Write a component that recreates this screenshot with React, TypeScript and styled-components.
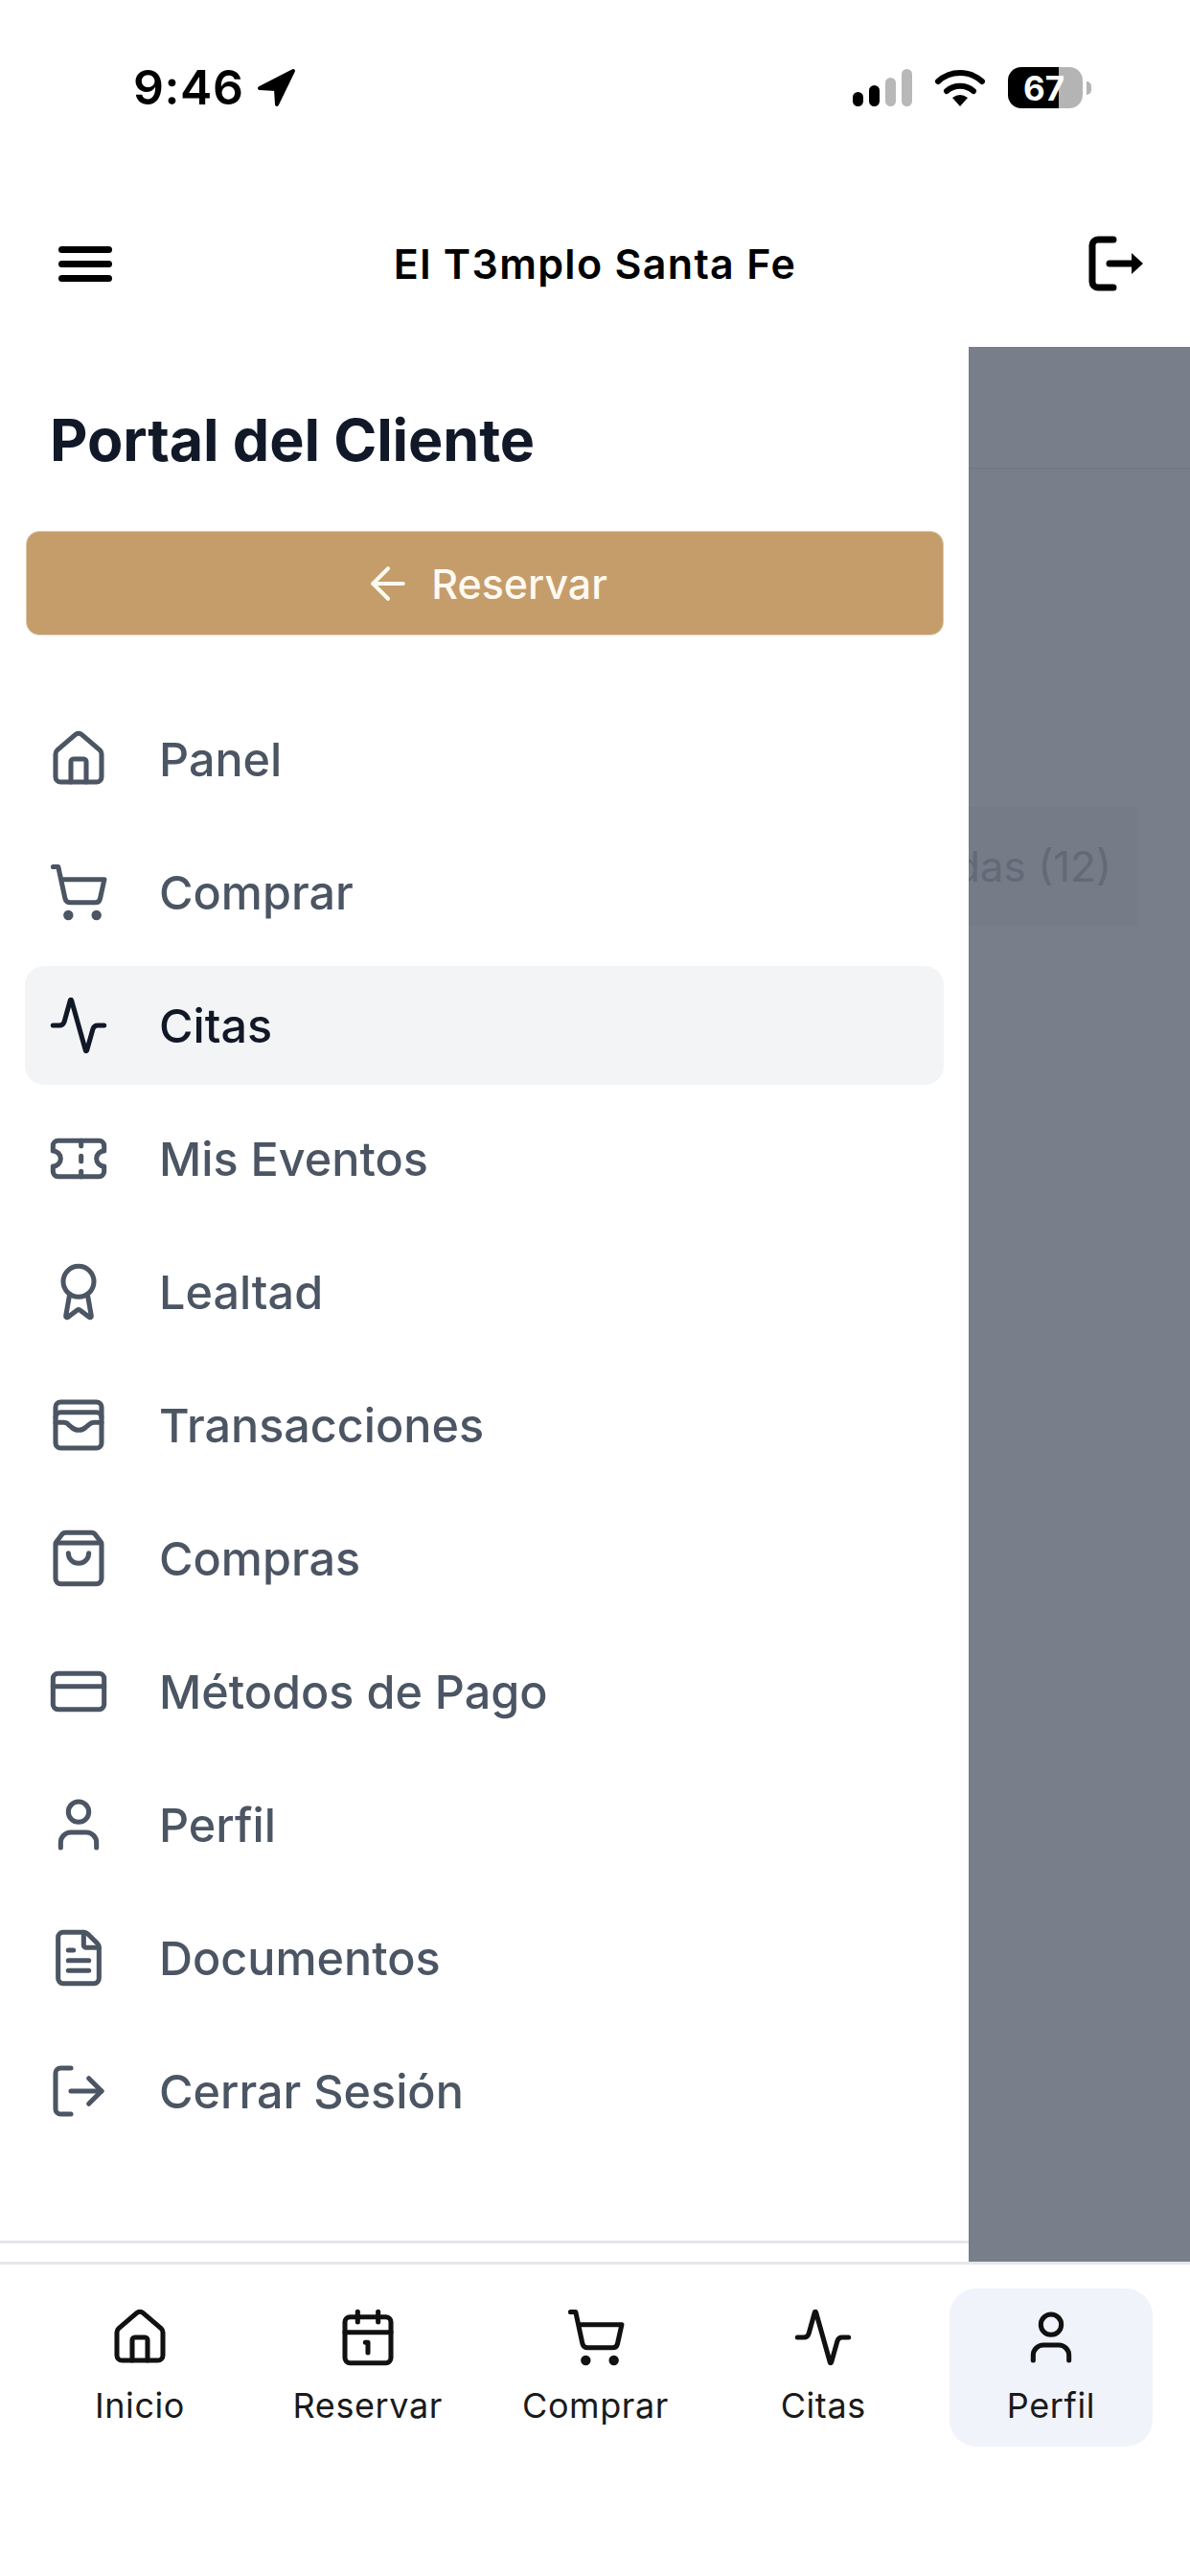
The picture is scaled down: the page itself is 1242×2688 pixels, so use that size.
import React from 'react';
import styled, { createGlobalStyle } from 'styled-components';
import {
  Activity,
  ArrowLeft,
  Award,
  Calendar1,
  CreditCard,
  FileText,
  House,
  LogOut,
  ShoppingBag,
  ShoppingCart,
  Ticket,
  User,
  WalletCards,
} from 'lucide-react';

const GlobalStyle = createGlobalStyle`
  html, body {
    margin: 0;
    padding: 0;
    background: #ffffff;
  }
  * {
    box-sizing: border-box;
  }
`;

const Page = styled.div`
  width: 1242px;
  height: 2688px;
  display: flex;
  flex-direction: column;
  overflow: hidden;
  background: #ffffff;
  font-family: Inter, "Liberation Sans", sans-serif;
`;

const StatusBar = styled.div`
  height: 188px;
  padding: 70px 103px 0 139px;
  display: flex;
  justify-content: space-between;
  align-items: flex-start;
`;

const Clock = styled.div`
  display: flex;
  align-items: center;
  gap: 13px;
  height: 42px;
  font-size: 50px;
  font-weight: 600;
  letter-spacing: 0.6px;
  color: #000000;
`;

const StatusIcons = styled.div`
  display: flex;
  align-items: center;
  gap: 24px;
  height: 43px;
`;

const Signal = styled.div`
  display: flex;
  align-items: flex-end;
  gap: 6px;
  height: 39px;
`;

const SignalBar = styled.span<{ $height: number; $on: boolean }>`
  width: 11px;
  height: ${(p) => p.$height}px;
  border-radius: 6px;
  background: ${(p) => (p.$on ? '#000000' : '#b8b8b8')};
`;

const BatteryWrap = styled.div`
  display: flex;
  align-items: center;
  gap: 4px;
`;

const Battery = styled.div`
  width: 78px;
  height: 43px;
  padding-left: 16px;
  border-radius: 14px;
  display: flex;
  align-items: center;
  background: linear-gradient(90deg, #000000 68%, #b4b4b4 68%);
  color: #ffffff;
  font-size: 35px;
  font-weight: 700;
`;

const BatteryNub = styled.span`
  width: 5px;
  height: 14px;
  border-radius: 0 5px 5px 0;
  background: #b4b4b4;
`;

const Header = styled.header`
  height: 174px;
  padding: 0 48px;
  display: grid;
  grid-template-columns: 1fr auto 1fr;
  align-items: center;
  background: #ffffff;
`;

const MenuButton = styled.div`
  width: 56px;
  margin-left: 13px;
  display: flex;
  flex-direction: column;
  gap: 8px;
`;

const MenuLine = styled.span`
  height: 7px;
  border-radius: 4px;
  background: #000000;
`;

const BrandTitle = styled.div`
  font-size: 43px;
  font-weight: 600;
  letter-spacing: 1.3px;
  color: #000000;
`;

const HeaderAction = styled.div`
  justify-self: end;
  display: flex;
`;

const Body = styled.div`
  flex: 1;
  min-height: 0;
  display: flex;
`;

const Drawer = styled.aside`
  width: 1011px;
  flex-shrink: 0;
  display: flex;
  flex-direction: column;
  background: #ffffff;
`;

const DrawerTitle = styled.h2`
  margin: 59px 0 0;
  padding-left: 52px;
  font-size: 61px;
  line-height: 76px;
  font-weight: 700;
  letter-spacing: -0.1px;
  color: #111827;
`;

const BookButton = styled.button`
  height: 109px;
  margin: 57px 26px 0 27px;
  display: flex;
  align-items: center;
  justify-content: center;
  gap: 18px;
  border: 1px solid #dcc7a8;
  border-radius: 14px;
  background: #c49d6b;
  color: #fff9f0;
  font-family: inherit;
  font-size: 43px;
  font-weight: 500;
`;

const NavList = styled.nav`
  margin: 67px 26px 0;
  display: flex;
  flex-direction: column;
  gap: 15px;
`;

const NavRow = styled.div<{ $active?: boolean }>`
  height: 124px;
  padding-left: 24px;
  display: flex;
  align-items: center;
  gap: 52px;
  border-radius: 20px;
  background: ${(p) => (p.$active ? '#f3f4f6' : 'transparent')};
  color: ${(p) => (p.$active ? '#111827' : '#4b5563')};
  font-size: 48.5px;
  font-weight: 500;
`;

const DrawerFooter = styled.div`
  margin-top: auto;
  height: 22px;
  border-top: 3px solid #e5e7eb;
`;

const Scrim = styled.div`
  flex: 1;
  min-width: 0;
  display: flex;
  flex-direction: column;
  overflow: hidden;
  background: #787e8a;
`;

const ScrimTopBar = styled.div`
  height: 128px;
  flex-shrink: 0;
  border-bottom: 2px solid #737985;
`;

const ScrimTab = styled.div`
  width: 176px;
  height: 124px;
  margin-top: 352px;
  padding-right: 27px;
  display: flex;
  align-items: center;
  justify-content: flex-end;
  background: #757b87;
  color: #636a77;
  font-size: 44px;
  white-space: nowrap;
`;

const BottomNav = styled.nav`
  height: 328px;
  flex-shrink: 0;
  padding: 25px 39px 0 40px;
  display: flex;
  justify-content: space-between;
  align-items: flex-start;
  border-top: 3px solid #e5e7eb;
  background: #ffffff;
`;

const TabItem = styled.div<{ $active?: boolean }>`
  width: 212px;
  height: 165px;
  padding-top: 19px;
  display: flex;
  flex-direction: column;
  align-items: center;
  border-radius: 28px;
  background: ${(p) => (p.$active ? '#f0f3f9' : 'transparent')};
  color: #111111;
`;

const TabLabel = styled.span`
  margin-top: 17px;
  font-size: 36px;
  line-height: 44px;
  letter-spacing: 0.6px;
  color: #1a1a1a;
`;

const menuItems = [
  { label: 'Panel', icon: House },
  { label: 'Comprar', icon: ShoppingCart },
  { label: 'Citas', icon: Activity, active: true },
  { label: 'Mis Eventos', icon: Ticket },
  { label: 'Lealtad', icon: Award },
  { label: 'Transacciones', icon: WalletCards },
  { label: 'Compras', icon: ShoppingBag },
  { label: 'Métodos de Pago', icon: CreditCard },
  { label: 'Perfil', icon: User },
  { label: 'Documentos', icon: FileText },
  { label: 'Cerrar Sesión', icon: LogOut },
];

const tabItems = [
  { label: 'Inicio', icon: House },
  { label: 'Reservar', icon: Calendar1 },
  { label: 'Comprar', icon: ShoppingCart },
  { label: 'Citas', icon: Activity },
  { label: 'Perfil', icon: User, active: true },
];

const LocationArrow = () => (
  <svg width="41" height="41" viewBox="0 0 41 41">
    <path d="M38 3 L3 21 L20 22 L21 38 Z" fill="#000" stroke="#000" strokeWidth="4" strokeLinejoin="round" />
  </svg>
);

const WifiIcon = () => (
  <svg width="52" height="40" viewBox="0 0 52 40" fill="none" stroke="#000" strokeWidth="6" strokeLinecap="round">
    <path d="M3 13 C16 1, 36 1, 49 13" />
    <path d="M12 23 C20 16, 32 16, 40 23" />
    <path d="M18 30 Q26 24 34 30 L26 39 Z" fill="#000" stroke="none" />
  </svg>
);

const ExitIcon = () => (
  <svg width="58" height="58" viewBox="0 0 58 58" fill="none" stroke="#000" strokeWidth="7" strokeLinecap="round">
    <path d="M26 4 H10 a6 6 0 0 0 -6 6 V48 a6 6 0 0 0 6 6 H26" />
    <path d="M22 29 H46" />
    <path d="M45 18 L57 29 L45 40 Z" fill="#000" stroke="none" />
  </svg>
);

const App: React.FC = () => {
  return (
    <>
      <GlobalStyle />
      <Page>
        <StatusBar>
          <Clock>
            9:46
            <LocationArrow />
          </Clock>
          <StatusIcons>
            <Signal>
              <SignalBar $height={15} $on />
              <SignalBar $height={22} $on />
              <SignalBar $height={30} $on={false} />
              <SignalBar $height={39} $on={false} />
            </Signal>
            <WifiIcon />
            <BatteryWrap>
              <Battery>67</Battery>
              <BatteryNub />
            </BatteryWrap>
          </StatusIcons>
        </StatusBar>

        <Header>
          <MenuButton>
            <MenuLine />
            <MenuLine />
            <MenuLine />
          </MenuButton>
          <BrandTitle>El T3mplo Santa Fe</BrandTitle>
          <HeaderAction>
            <ExitIcon />
          </HeaderAction>
        </Header>

        <Body>
          <Drawer>
            <DrawerTitle>Portal del Cliente</DrawerTitle>
            <BookButton>
              <ArrowLeft size={54} strokeWidth={1.8} />
              Reservar
            </BookButton>
            <NavList>
              {menuItems.map(({ label, icon: Icon, active }) => (
                <NavRow key={label} $active={active}>
                  <Icon size={64} strokeWidth={1.9} />
                  {label}
                </NavRow>
              ))}
            </NavList>
            <DrawerFooter />
          </Drawer>
          <Scrim>
            <ScrimTopBar />
            <ScrimTab>Completadas (12)</ScrimTab>
          </Scrim>
        </Body>

        <BottomNav>
          {tabItems.map(({ label, icon: Icon, active }) => (
            <TabItem key={label} $active={active}>
              <Icon size={64} strokeWidth={1.9} />
              <TabLabel>{label}</TabLabel>
            </TabItem>
          ))}
        </BottomNav>
      </Page>
    </>
  );
};

export default App;
